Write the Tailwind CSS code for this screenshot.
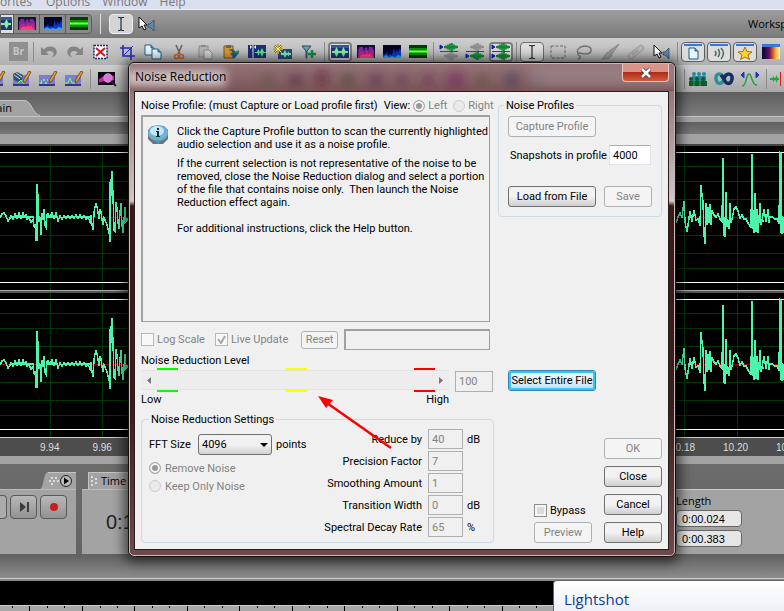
<!DOCTYPE html>
<html lang="en">
  <head>
    <meta charset="UTF-8" />
    <meta name="viewport" content="width=device-width, initial-scale=1.0" />
    <title>Noise Reduction</title>
    <script src="https://cdn.jsdelivr.net/npm/@tailwindcss/browser@4"></script>
  </head>
  <body class="relative h-screen overflow-hidden bg-[#636363] font-['Open_Sans','Noto_Sans',sans-serif] text-xs text-black">
    <!-- Icon Sprite -->
    <svg class="absolute size-0">
      <symbol id="i-wave" viewBox="0 0 20 16">
        <rect x="1" y="1" width="18" height="13" fill="#1e3670" /><path d="M1 1h18v3H1z" fill="#33569c" />
        <path d="M2 7h16v2H2zM4 8l2.500-5L9 8l-2.500 5zM11 8l2.500-5L16 8l-2.500 5z" fill="#7ff0a8" />
      </symbol>
      <symbol id="i-pink" viewBox="0 0 20 16">
        <rect x="1" y="1" width="18" height="13" fill="#1c0e33" />
        <path d="M2 14V6l2-3h3l1 4 1-3 2-1 1 4 1-4h3l2 3v8z" fill="#7a2a9a" /><path d="M2 14l1-4 2-3 2 1 2 3 1-4h2l1 3 2-3 2 2 1 5z" fill="#c8208a" /><path d="M3 14l2-3 9-1 4 4z" fill="#ff4078" />
      </symbol>
      <symbol id="i-blue" viewBox="0 0 20 16">
        <rect x="1" y="1" width="18" height="13" fill="#02042a" />
        <path d="M1 12l1-3 1 2 2-3 1 3 2-1 2 1 2-7 1 6 2-5 1 4 2-5 1 3v6H1z" fill="#0c36d8" /><path d="M1 13l3-2 3 2 3-1 3 1 3-2 3 1v2H1z" fill="#27a8f5" />
      </symbol>
      <symbol id="i-green" viewBox="0 0 20 16">
        <rect x="1" y="1" width="18" height="13" fill="#063a06" /><rect x="1" y="4" width="18" height="7" fill="#108c10" /><rect x="1" y="6" width="18" height="3" fill="#30d818" /><rect x="1" y="7" width="18" height="1" fill="#a0ff5a" />
      </symbol>
      <symbol id="i-ibeam" viewBox="0 0 20 16"><path d="M7 1.500h2l1 1 1-1h2M10 2v12M7 14.500h2l1-1 1 1h2" fill="none" stroke="#222c38" stroke-width="1.200" /></symbol>
      <symbol id="i-cursor" viewBox="0 0 20 16">
        <path d="M2 1v11l3-2 2 4 2-1-2-4h3z" fill="#fff" stroke="#111" /><path d="M11 8h2l4-4v11l-4-4h-2z" fill="#5d8ab0" stroke="#29455e" stroke-width=".7" />
      </symbol>
      <symbol id="i-undo" viewBox="0 0 20 16"><path d="M2 3v8h8L7.500 8.500c2-2 6-2 7 1 .5 2-1 3-2 4 4-1 6-4 5-7C16 2 9 1 5 5.500z" fill="#858585" /></symbol>
      <symbol id="i-delete" viewBox="0 0 20 16">
        <rect x="3" y="1.500" width="13" height="13" fill="#fff" stroke="#1c2c60" stroke-width="1.500" stroke-dasharray="2 1" /><path d="M5 4l9 8M14 4l-9 8" stroke="#d01820" stroke-width="2" />
      </symbol>
      <symbol id="i-crop" viewBox="0 0 20 16"><path d="M6 1v11h12M3 4h11v12" fill="none" stroke="#2a2ab8" stroke-width="1.600" /><path d="M6 12L16 2" stroke="#2a2ab8" /></symbol>
      <symbol id="i-copy" viewBox="0 0 20 16">
        <path d="M2 1h6l3 3v7H2z" fill="#e9f5fc" stroke="#27628a" /><path d="M9 5h6l3 3v7H9z" fill="#e9f5fc" stroke="#27628a" /><path d="M8 1v3h3M15 5v3h3" fill="#5fa6cf" stroke="#27628a" />
      </symbol>
      <symbol id="i-cut" viewBox="0 0 20 16">
        <path d="M7 1l4 9M13 1L9 10" stroke="#6d6258" stroke-width="1.500" /><circle cx="7.500" cy="12.500" r="2" fill="none" stroke="#c86428" stroke-width="1.600" /><circle cx="12.500" cy="12.500" r="2" fill="none" stroke="#c86428" stroke-width="1.600" />
      </symbol>
      <symbol id="i-paste" viewBox="0 0 20 16">
        <path d="M4 2h9v11H4z" fill="#b4b4b4" stroke="#8c8c8c" /><path d="M6 1h5v2H6z" fill="#888" /><path d="M9 6h5l3 3v6H9z" fill="#d2d2d2" stroke="#8c8c8c" />
      </symbol>
      <symbol id="i-pastenew" viewBox="0 0 20 16">
        <path d="M3 2h9v12H3z" fill="#d89a3c" stroke="#8a5412" /><path d="M5 1h5v3H5z" fill="#666" /><path d="M7 6c4-2 7 0 8 3h3l-5 6-4-6h3c-1-2-3-3-5-3z" fill="#1d5c8c" /><path d="M14 8l4-2v4z" fill="#2c8a3c" />
      </symbol>
      <symbol id="i-markwave" viewBox="0 0 20 16">
        <rect x="1" y="1" width="18" height="13" fill="#1d2f78" /><path d="M6 1v14" stroke="#dfe6ff" /><path d="M3 1l2 2-2 2zM9 1L7 3l2 2z" fill="#fff" /><path d="M8 8h11v1H8zM10 8l1.500-3L13 8l-1.500 4zM13 8l2-4 2 4-2 5z" fill="#5fe08a" />
      </symbol>
      <symbol id="i-starwave" viewBox="0 0 20 16">
        <rect x="5" y="5" width="14" height="10" fill="#2a4a80" /><path d="M8 9h10v2H8zM10 10l2-4 2 4-2 4zM14 10l1.500-2.500L17 10l-1.500 2.500z" fill="#7ff0a8" /><path d="M5 0v10M0 5h10M1.500 1.500l7 7M8.500 1.500l-7 7" stroke="#6a6420" stroke-width="2" /><path d="M5 0v10M0 5h10M1.500 1.500l7 7M8.500 1.500l-7 7" stroke="#fff27a" />
      </symbol>
      <symbol id="i-funnel" viewBox="0 0 20 16"><path d="M3 2h9L8 7v7H7V7z" fill="#6aa0b8" stroke="#1c4a60" /><path d="M13 6v8M9 10h8" stroke="#0c8c44" stroke-width="2.500" /></symbol>
      <symbol id="i-trk" viewBox="0 0 20 8"><path d="M1 2l3 2-3 2z" fill="#1018c0" stroke="#1018c0" /><path d="M5 4h14M7 2.500v3M9 1.500v5M11 .5v7M13 0v8M15 1.500v5M17 2.500v3" stroke="#0f8a32" stroke-width="1.800" /></symbol>
      <symbol id="i-trkoff" viewBox="0 0 20 8"><path d="M5 4h14M7 2.500v3M9 1.500v5M11 .5v7M13 0v8M15 1.500v5M17 2.500v3" stroke="#8f8f8f" stroke-width="1.800" /></symbol>
      <symbol id="i-marquee" viewBox="0 0 20 16"><rect x="3" y="2" width="14" height="12" fill="none" stroke="#6a6a6a" stroke-dasharray="3 1.500" /></symbol>
      <symbol id="i-lasso" viewBox="0 0 20 16"><path d="M5 10c-4-3 0-8 7-8 7 1 7 8-1 8-3 0-5-1-6-1-3 1 0 3 1 3s0 3-2 3" fill="none" stroke="#777" stroke-width="1.500" /></symbol>
      <symbol id="i-brush" viewBox="0 0 20 16"><path d="M19 0L9 7l3 3zM8 8l4 3c-2 4-6 4-10 4 3-2 3-6 6-7z" fill="#9c9c9c" stroke="#6f6f6f" stroke-width=".6" /></symbol>
      <symbol id="i-bandage" viewBox="0 0 20 16"><path d="M5 12L15 4" stroke="#8f8f8f" stroke-width="6" stroke-linecap="round" /><path d="M5 12L15 4" stroke="#b8b8b8" stroke-width="4.500" stroke-linecap="round" /><path d="M7 10L13 6" stroke="#909090" stroke-width="3" stroke-dasharray="1 1.500" /></symbol>
      <symbol id="i-page" viewBox="0 0 20 16"><path d="M1 0h18v2H1z" fill="#3a78d8" /><path d="M6 4h6l3 3v8H6z" fill="#e6f4fc" stroke="#1d5880" /><path d="M12 4v3h3" fill="#73b4dc" stroke="#1d5880" /></symbol>
      <symbol id="i-sound" viewBox="0 0 20 16"><path d="M1 0h18v2H1z" fill="#3a78d8" /><path d="M6 7q2 2 0 5M9 5q3 4 0 8M12 4q5 5 0 11" fill="none" stroke="#4c6a60" stroke-width="1.500" /></symbol>
      <symbol id="i-star" viewBox="0 0 20 16"><path d="M1 0h18v2H1z" fill="#3a78d8" /><path d="M10 3l2 4.500 5 .5-4 3 1.500 4.500-4.500-2.500-4.500 2.500L7 11 3 8l5-.5z" fill="#ffd235" stroke="#a8700c" /></symbol>
      <linearGradient id="heat"><stop offset=".1" stop-color="#150a3c" /><stop offset=".4" stop-color="#641060" /><stop offset=".6" stop-color="#d05a20" /><stop offset=".8" stop-color="#ffc050" /><stop offset="1" stop-color="#fff0c0" /></linearGradient>
      <symbol id="i-heat" viewBox="0 0 20 16"><path d="M1 0h18v3H1z" fill="#3a78d8" /><path d="M1 3h18v12H1z" fill="url(#heat)" /></symbol>
      <symbol id="i-pencil" viewBox="0 0 20 16">
        <path d="M1 4h16v11H1z" fill="#7c7cd4" /><path d="M1 13h16v2H1z" fill="#34348c" /><path d="M11 12l1-4 5-8 2 1-5 9z" fill="#e0a040" stroke="#6a3c10" stroke-width=".8" />
      </symbol>
      <symbol id="i-zoom" viewBox="0 0 20 16"><rect x="1" y="1" width="17" height="13" fill="#0c0210" /><path d="M2 8l5-3 5 2 5-3v5l-6 3-4-2-5 2z" fill="#d818b8" /><circle cx="11" cy="7" r="4" fill="#e070e0" stroke="#b89ac8" stroke-width="1.500" /><path d="M14 10l5 5" stroke="#222" stroke-width="2" /></symbol>
      <symbol id="i-people" viewBox="0 0 20 16">
        <g fill="#2a8a9c"><circle cx="6" cy="3" r="2" /><circle cx="11" cy="3" r="2" /><circle cx="16" cy="3" r="2" /><path d="M4 5h14v5H4z" /></g>
        <g fill="#0d5a24"><circle cx="3" cy="8" r="2" /><circle cx="9" cy="8" r="2" /><circle cx="15" cy="8" r="2" /><path d="M1 10h18v5H1z" /></g><path d="M6 10v5M12 10v5" stroke="#2fae4c" />
      </symbol>
      <symbol id="i-loop" viewBox="0 0 20 16"><path d="M10 8C8 1 1 2 2 8s6 6 8 0" fill="none" stroke="#2a90a0" stroke-width="3.500" /><path d="M10 8c2-7 9-6 8 0s-6 6-8 0L7 4" fill="none" stroke="#152f60" stroke-width="3.500" /></symbol>
      <symbol id="i-curve" viewBox="0 0 20 16"><path d="M2 15c5 0 4-12 7-12s3 12 8 11" fill="none" stroke="#22a03c" stroke-width="1.500" /><path d="M1 4l3-3v6zM19 4l-3-3v6z" fill="#1838c0" stroke="#1838c0" /></symbol>
      <symbol id="grip" viewBox="0 0 11 8"><path d="M3 1h2M7 1h2M1 4h2M5 4h2M9 4h2M3 7h2" stroke="#ddd" stroke-width="2" /></symbol>
      <symbol id="grip-tall" viewBox="0 0 7 11"><path d="M0 1h2M4 3h2M0 5h2M4 7h2M0 9h2" stroke="#ddd" stroke-width="2" /></symbol>
    </svg>

    <div class="flex min-h-full flex-col">
      <!-- Menu Bar -->
      <nav class="flex h-[9px] items-end gap-3 overflow-hidden bg-[#dbe0f0] leading-[14px] text-[#777]">
        <a href="#" class="flex w-[34px] shrink-0 justify-end pr-0.5">Favorites</a>
        <a href="#">Options</a>
        <a href="#">Window</a>
        <a href="#">Help</a>
      </nav>

      <!-- View Toolbar -->
      <div class="flex h-[29px] items-center border-t border-[#eee] bg-linear-to-b from-[#9e9e9e] to-[#797979]">
        <div class="flex h-5 items-center rounded-r border border-[#5c5c5c] bg-[#8a8a8a]">
          <div class="flex h-full w-3 items-center justify-end overflow-hidden bg-[#ddd]"><svg class="h-4 w-5 shrink-0"><use href="#i-wave" /></svg></div>
          <div class="flex h-full w-[26px] items-center justify-center border-l border-[#5c5c5c]"><svg class="h-4 w-5"><use href="#i-pink" /></svg></div>
          <div class="flex h-full w-[26px] items-center justify-center border-l border-[#5c5c5c]"><svg class="h-4 w-5"><use href="#i-blue" /></svg></div>
          <div class="flex h-full w-[26px] items-center justify-center border-l border-[#5c5c5c]"><svg class="h-4 w-5"><use href="#i-green" /></svg></div>
        </div>
        <div class="mx-2 h-5 w-px bg-[#ddd]"></div>
        <button class="flex h-5 w-6 items-center justify-center rounded border border-[#eee] bg-[#d4d4d4]"><svg class="h-4 w-5"><use href="#i-ibeam" /></svg></button>
        <button class="ml-1"><svg class="h-4 w-5"><use href="#i-cursor" /></svg></button>
        <div class="ml-auto w-9 overflow-hidden whitespace-nowrap text-[11px]">Workspace:</div>
      </div>

      <!-- Edit Toolbar -->
      <div class="flex h-[27px] items-center overflow-hidden bg-linear-to-b from-[#cecece] to-[#b0b0b0] *:shrink-0">
        <div class="flex w-[31px] justify-end pr-[3px]"><span class="flex size-[19px] items-center justify-center bg-[#8f8f8f] text-[10px] font-bold text-[#c8c8c8]">Br</span></div>
        <div class="mx-0.5 h-5 w-px bg-[#8c8c8c]"></div>
        <svg class="mx-[3px] h-4 w-5"><use href="#i-undo" /></svg>
        <svg class="mx-[3px] h-4 w-5 -scale-x-100"><use href="#i-undo" /></svg>
        <svg class="mx-[3px] h-4 w-5"><use href="#i-delete" /></svg>
        <svg class="mx-[3px] h-4 w-5"><use href="#i-crop" /></svg>
        <svg class="mx-[3px] h-4 w-5"><use href="#i-copy" /></svg>
        <svg class="mx-[3px] h-4 w-5"><use href="#i-cut" /></svg>
        <svg class="mx-[3px] h-4 w-5"><use href="#i-paste" /></svg>
        <svg class="mx-[3px] h-4 w-5"><use href="#i-pastenew" /></svg>
        <svg class="mx-[3px] h-4 w-5"><use href="#i-markwave" /></svg>
        <svg class="mx-[3px] h-4 w-5"><use href="#i-starwave" /></svg>
        <svg class="mx-[3px] h-4 w-5"><use href="#i-funnel" /></svg>
        <div class="mx-0.5 h-5 w-px bg-[#8c8c8c]"></div>
        <div class="mx-px flex h-5 w-6 items-center justify-center rounded border-2 border-[#7e7e7e] bg-[#ddd]"><svg class="h-4 w-5 shrink-0"><use href="#i-wave" /></svg></div>
        <svg class="mx-[3px] h-4 w-5"><use href="#i-pink" /></svg>
        <svg class="mx-[3px] h-4 w-5"><use href="#i-blue" /></svg>
        <svg class="mx-[3px] h-4 w-5"><use href="#i-green" /></svg>
        <div class="mx-0.5 h-5 w-px bg-[#8c8c8c]"></div>
        <div class="flex w-[26px] flex-col items-center"><svg class="h-2 w-5"><use href="#i-trk" /></svg><div class="h-px w-[18px] bg-red-600"></div><svg class="h-2 w-5"><use href="#i-trkoff" /></svg></div>
        <div class="flex w-[26px] flex-col items-center"><svg class="h-2 w-5"><use href="#i-trkoff" /></svg><div class="h-px w-[18px] bg-red-600"></div><svg class="h-2 w-5"><use href="#i-trk" /></svg></div>
        <div class="mx-px flex h-5 w-6 flex-col items-center justify-center rounded border-2 border-[#7e7e7e] bg-[#ddd]"><svg class="h-2 w-5 shrink-0"><use href="#i-trk" /></svg><div class="h-px w-[18px] shrink-0 bg-red-600"></div><svg class="h-2 w-5 shrink-0"><use href="#i-trk" /></svg></div>
        <div class="mx-0.5 h-5 w-px bg-[#8c8c8c]"></div>
        <div class="mx-px flex h-5 w-6 items-center justify-center rounded border border-[#6e6e6e] bg-[#ddd]"><svg class="h-4 w-5"><use href="#i-ibeam" /></svg></div>
        <svg class="mx-[3px] h-4 w-5"><use href="#i-marquee" /></svg>
        <svg class="mx-[3px] h-4 w-5"><use href="#i-lasso" /></svg>
        <svg class="mx-[3px] h-4 w-5"><use href="#i-brush" /></svg>
        <svg class="mx-[3px] h-4 w-5"><use href="#i-bandage" /></svg>
        <svg class="mx-[3px] h-4 w-5"><use href="#i-cursor" /></svg>
        <div class="mx-0.5 h-5 w-px bg-[#8c8c8c]"></div>
        <div class="mx-px flex h-5 w-6 items-center justify-center rounded border border-[#5e5e5e] bg-[#ddd]"><svg class="h-4 w-5 shrink-0"><use href="#i-page" /></svg></div>
        <div class="mx-px flex h-5 w-6 items-center justify-center rounded border border-[#5e5e5e] bg-[#ddd]"><svg class="h-4 w-5 shrink-0"><use href="#i-sound" /></svg></div>
        <div class="mx-px flex h-5 w-6 items-center justify-center rounded border border-[#5e5e5e] bg-[#ddd]"><svg class="h-4 w-5 shrink-0"><use href="#i-star" /></svg></div>
        <svg class="mx-[3px] h-4 w-5"><use href="#i-heat" /></svg>
      </div>

      <!-- Effects Toolbar -->
      <div class="flex h-[27px] items-center overflow-hidden bg-linear-to-b from-[#cecece] to-[#a8a8a8] *:shrink-0">
        <div class="flex w-[9px] justify-end pr-[3px]"><svg class="h-4 w-5 shrink-0"><use href="#i-pencil" /></svg></div>
        <svg class="mx-[3px] h-4 w-5" viewBox="0 0 20 16"><use href="#i-pencil" width="20" height="16" /><path d="M1 3l4-2 6 3-1 5-4 2-4-2z" fill="#34506c" /><path d="M2 4l6 4M4 2l6 4" stroke="#cde" /><path d="M6 12l3-3 3 4" stroke="#6f6" fill="none" /></svg>
        <svg class="mx-[3px] h-4 w-5" viewBox="0 0 20 16"><use href="#i-pencil" width="20" height="16" /><path d="M2 12h2M5 9h2M7 12h2M3 10h1M9 9h1" stroke="#7f7" stroke-width="1.500" /></svg>
        <svg class="mx-[3px] h-4 w-5" viewBox="0 0 20 16"><use href="#i-pencil" width="20" height="16" /><path d="M1 12h3l2-5 2 5h3" stroke="#7f7" fill="none" /></svg>
        <div class="mx-[3px] h-5 w-px bg-[#8c8c8c]"></div>
        <svg class="mx-[3px] h-4 w-5"><use href="#i-zoom" /></svg>
        <div class="ml-auto h-5 w-px bg-[#8c8c8c]"></div>
        <svg class="mx-[3px] h-4 w-5"><use href="#i-people" /></svg>
        <svg class="mx-[3px] h-4 w-5"><use href="#i-loop" /></svg>
        <svg class="mx-[3px] h-4 w-5"><use href="#i-curve" /></svg>
        <div class="mx-[3px] h-5 w-px bg-[#8c8c8c]"></div>
        <svg class="h-4 w-3.5" viewBox="0 0 14 16"><path d="M0 7h9v2H0zM2 8l1.500-3L5 8l-1.500 3zM5 8l1.500-4L8 8l-1.500 4z" fill="#20a83c" /><path d="M10.500 1v14" stroke="#e01818" /></svg>
      </div>

      <!-- Document Tabs -->
      <div class="flex h-[25px] items-end border-b border-[#c4c4c4] bg-linear-to-b from-[#5e5e5e] to-[#7c7c7c]">
        <div class="flex h-4 w-6 items-center justify-end overflow-hidden border-t border-[#c4c4c4] bg-[#a3a3a3] pr-3 text-[11px] whitespace-nowrap">Main</div>
        <svg class="h-4 w-4" viewBox="0 0 16 16"><path d="M0 0C8 0 8 14 16 16H0z" fill="#a3a3a3" /><path d="M0 .5C8 .5 8 14 16 15.500" fill="none" stroke="#c4c4c4" /></svg>
      </div>
      <div class="h-[5px] bg-[#a3a3a3]"></div>
      <div class="h-3 bg-linear-to-b from-[#606060] to-[#787878]"></div>
      <div class="h-3 border-b-2 border-[#444] bg-[#a3a3a3]"></div>

      <!-- Waveform Display -->
      <svg class="h-[291px] w-full bg-black" viewBox="0 0 784 291" preserveAspectRatio="none" shape-rendering="crispEdges">
        <defs>
          <g id="channel">
            <path d="M0 20.500h784M0 35.500h784M0 53.500h784M0 89.500h784M0 107.500h784M0 122.500h784" stroke="#003800" />
            <path d="M0 6.500h784M0 136.500h784" stroke="#fff" />
            <path d="M0 71.500h784" stroke="#a00000" />
            <g fill="none" stroke="#4df5ab" stroke-width="1.500" transform="translate(0 71)">
              <path d="M0 1L2-3 4-4 6-1 8 4 10 1 11-1 13 2 15-3 17 1 19-4 21 1 23-4 24 0 26-2 27 2 29 1 31 5 33 3 34 10 35 7 36 24 37-33 38-20 39 5 40 0 41 18 42-4 43 3 44-8 45 8 46 10 47-2 48-3 50 0 52-4 54 1 56-4 58 4 60-1 62 2 64-1 66 1 68-1 70 1 72-1 74 1 76-2 78 1 80-2 82 1 84-1 86 2 88 0 90 5 91-2 92 8 93 13 94-4 95-10 96-14 97-10 98-5 99 2 100-8 101-5 102 3 103 8 104 1 105 3 107 8 108 12 109 14 110 25 111-35 112-46 113-22 114 13 115 14 116-15 117-8 118 5 119 12 120-5 121-14 122 8 123 16 124 4 125-10 126 4 130 0" />
              <path d="M676 6L678 0 680-4 682 1 684-16 685 5 687 15 688 8 690-6 692 5 694-7 696 3 698 2 699 5 700 9 701-32 702-22 703-16 704 18 705 27 706-14 707 8 708-10 709 6 710-13 711 8 712-7 714-2 716 0 718-3 720 2 722 4 723-59 724 18 725 20 726-25 727 10 728 3 729 12 730-14 731 6 732 2 734-8 736-10 738-6 740 1 742-2 744 2 746 2 748 6 750 9 751 11 752-63 753 10 754 16 755-24 756 15 757-8 758 16 759 3 760-14 761 8 762 4 764-8 766 5 768-8 769 6 770 0 772 0 775 2 777 2 779 7 780-64 781-63 782 17 783 0 784 16" />
              <path d="M11 0H34M47 0H58M76 0H92M110-35V25M37-33V24M752-60V10M755 4H764M780.500-64V16" stroke-width="2" />
            </g>
          </g>
        </defs>
        <path d="M50.500 0v291M102.500 0v291M684.500 0v291M737.500 0v291" stroke="#003800" />
        <use href="#channel" />
        <use href="#channel" y="147" />
        <path d="M0 144.500h784" stroke="#aaa" /><path d="M0 146h784" stroke="#555" stroke-width="2" />
      </svg>

      <!-- Time Ruler -->
      <div class="flex h-[19px] items-center justify-between border-t border-[#ccc] bg-[#4d4d4d] pt-0.5 font-['Liberation_Sans',sans-serif] text-[10px] leading-[14px] text-[#ddd]">
        <div class="flex gap-[33px] pl-10"><span>9.94</span><span>9.96</span></div>
        <div class="flex w-[114px] gap-7 overflow-hidden"><span>10.18</span><span>10.20</span><span>10.22</span></div>
      </div>
      <div class="h-2 bg-[#a3a3a3]"></div>

      <!-- Bottom Panels -->
      <div class="flex h-[90px] gap-1.5 bg-linear-to-b from-[#6c6c6c] to-[#646464] pt-2">
        <div class="flex w-[76px] flex-col">
          <div class="flex h-[17px] justify-end">
            <svg class="h-[17px] w-2" viewBox="0 0 8 17"><path d="M0 17C4 16 3 1 8 0V17z" fill="#a3a3a3" /></svg>
            <div class="flex w-7 items-center gap-px border-t border-[#c4c4c4] bg-[#a3a3a3]">
              <svg class="h-2 w-[11px]"><use href="#grip" /></svg>
              <svg class="size-3" viewBox="0 0 12 12"><circle cx="6" cy="6" r="5.500" fill="#bbb" stroke="#222" /><path d="M4 2.500L9 6 4 9.500z" /></svg>
            </div>
          </div>
          <div class="flex h-[65px] gap-[3px] border-t border-[#bbb] bg-[#a3a3a3] pt-[5px]">
            <button class="h-6 w-[7px] rounded-r border border-l-0 border-[#5a5a5a] bg-[#ababab]"></button>
            <button class="flex h-6 w-[27px] items-center justify-center rounded border border-[#5a5a5a] bg-linear-to-b from-[#b8b8b8] to-[#929292]"><svg class="h-3 w-3" viewBox="0 0 12 12"><path d="M2 1l6 5-6 5zM9 1h2v10H9z" fill="#3c3c3c" /></svg></button>
            <button class="flex h-6 w-[27px] items-center justify-center rounded border border-[#5a5a5a] bg-linear-to-b from-[#b8b8b8] to-[#929292]"><span class="size-2 rounded-full bg-[#c42020]"></span></button>
          </div>
        </div>
        <div class="flex w-[130px] flex-col">
          <div class="ml-1.5 flex h-[17px] items-center gap-[3px] border-t border-l border-[#c4c4c4] bg-[#a3a3a3] pl-0.5"><svg class="h-[11px] w-[7px]"><use href="#grip-tall" /></svg><span class="text-[11px]">Time</span></div>
          <div class="h-[65px] border-t border-[#bbb] bg-[#a3a3a3] pt-[18px] pl-6 font-['Liberation_Sans',sans-serif] text-xl text-[#222]">0:10.000</div>
        </div>
        <div class="mt-[17px] ml-auto flex w-[116px] flex-col border-t border-[#ccc] bg-[#a3a3a3] pt-[3px] pl-2">
          <span class="text-[11px] leading-4">Length</span>
          <div class="flex flex-col gap-[3px] pt-px">
            <input aria-label="Selection length" value="0:00.024" class="h-[17px] w-[66px] rounded border border-[#666] bg-[#e6e6e6] px-[5px] font-['Liberation_Sans',sans-serif] text-[11px]" />
            <input aria-label="View length" value="0:00.383" class="h-[17px] w-[66px] rounded border border-[#666] bg-[#e6e6e6] px-[5px] font-['Liberation_Sans',sans-serif] text-[11px]" />
          </div>
        </div>
      </div>
      <div class="h-6 bg-linear-to-b from-[#606060] to-[#8c8c8c]"></div>
      <div class="h-[3px] border-t border-[#ccc] bg-[#888]"></div>
      <div class="h-6 bg-black"></div>
      <svg class="h-[6px] w-full grow border-t border-[#ccc] bg-[#a8a8a8]"><path d="M12.500 0v2M47.500 0v2M64.500 0v2M100.500 0v2M117.500 0v2M152.500 0v2M169.500 0v2M204.500 0v2M222.500 0v2M257.500 0v2M274.500 0v2M309.500 0v2M327.500 0v2M362.500 0v2M379.500 0v2M414.500 0v2M432.500 0v2M467.500 0v2M484.500 0v2M519.500 0v2M536.500 0v2M29.500 0v5M82.500 0v5M134.500 0v5M187.500 0v5M239.500 0v5M292.500 0v5M344.500 0v5M397.500 0v5M449.500 0v5M502.500 0v5" stroke="#000" /></svg>
    </div>

    <!-- Noise Reduction Dialog -->
    <div role="dialog" aria-labelledby="dialog-title" class="absolute top-[62px] left-32 flex w-[548px] flex-col rounded-md border border-[#141010] bg-[linear-gradient(#7d6266,#cfc8c8_28%,#3a1818_29%,#3a1c1c_70%,#6e4a4c)] shadow-[0_1px_12px_4px_rgba(0,0,0,0.6)]">
      <div class="rounded-[5px] border border-[#c8b8ba] px-[5px] pb-[5px] pl-1">
        <div class="relative flex h-[27px] items-center justify-between">
          <!-- Glass title bar with the toolbar icons showing through -->
          <svg class="absolute inset-y-0 -left-1 h-full w-[544px] rounded-t" viewBox="0 0 544 27" preserveAspectRatio="none">
            <defs><filter id="soft"><feGaussianBlur stdDeviation="5" /></filter><linearGradient id="glass" x2="0" y2="1"><stop stop-color="#957478" /><stop offset="1" stop-color="#775456" /></linearGradient></defs>
            <rect width="544" height="27" fill="url(#glass)" />
            <g filter="url(#soft)">
              <rect x="-4" y="6" width="100" height="16" fill="#d0c2c5" />
              <g opacity=".55">
                <circle cx="138" cy="16" r="7" fill="#5c5840" /><circle cx="166" cy="16" r="7" fill="#4c2c40" /><circle cx="192" cy="14" r="7" fill="#5c1830" /><circle cx="218" cy="16" r="7" fill="#484838" />
                <circle cx="246" cy="16" r="7" fill="#582c58" /><circle cx="272" cy="16" r="6" fill="#583858" /><circle cx="298" cy="16" r="6" fill="#702c58" /><circle cx="326" cy="16" r="9" fill="#782060" /><circle cx="352" cy="16" r="6" fill="#585038" />
                <circle cx="382" cy="16" r="8" fill="#484060" /><circle cx="408" cy="16" r="7" fill="#484058" />
              </g>
              <rect x="400" y="2" width="150" height="20" fill="#a08c92" opacity=".6" />
            </g>
          </svg>
          <h1 id="dialog-title" class="relative pb-0.5 pl-px">Noise Reduction</h1>
          <button aria-label="Close" class="relative flex h-[18px] w-[47px] items-center justify-center self-start rounded-b border border-t-0 border-[#e8c8c0] bg-linear-to-b from-[#d89488] from-45% via-[#b02c14] via-50% to-[#d05c40]">
            <svg class="h-3 w-3" viewBox="0 0 12 12"><path d="M2 2l8 8M10 2l-8 8" stroke="#4a3038" stroke-width="4" /><path d="M2 2l8 8M10 2l-8 8" stroke="#fff" stroke-width="2.500" /></svg>
          </button>
        </div>

        <form class="flex border border-[#2a1c1c] bg-[#f0f0f0] pt-1.5 pr-1.5 pb-1.5 pl-1.5 font-[Roboto,sans-serif] text-[11px] leading-[13px] whitespace-nowrap">
          <!-- Left Column -->
          <div class="flex w-[353px] shrink-0 flex-col">
            <div class="flex h-[17px] items-start gap-1.5 pt-px">
              <span>Noise Profile: (must Capture or Load profile first)</span>
              <label class="flex items-center gap-[3px] text-[#838383]"><span class="text-black">View:</span><input type="radio" name="view" checked disabled class="size-3 appearance-none rounded-full border border-[#aaa] bg-[#f4f4f4] checked:bg-[#999] checked:inset-ring-2 checked:inset-ring-[#f4f4f4]" />Left</label>
              <label class="flex items-center gap-[3px] text-[#838383]"><input type="radio" name="view" disabled class="size-3 appearance-none rounded-full border border-[#ccc] bg-[#eaeaea]" />Right</label>
            </div>
            <div class="flex h-[207px] w-[349px] gap-2 border border-t-2 border-l-2 border-[#a0a0a0] pt-2 pl-1">
              <svg class="h-5 w-[22px] shrink-0" viewBox="0 0 22 20"><path d="M5 1h12l4 4v9l-5 5H6l-5-5V5z" fill="#6f7478" /><ellipse cx="11" cy="8" rx="10" ry="8" fill="#6fb2d6" /><ellipse cx="10" cy="6" rx="7" ry="5" fill="#c4e6f6" /><path d="M10 3h2v2h-2zM9 6h3v5h1v1H9v-1h1V7H9z" fill="#14303f" /><path d="M7 15l4 4 4-4z" fill="#4a9ac8" /></svg>
              <div>
                <p>Click the Capture Profile button to scan the currently highlighted<br />audio selection and use it as a noise profile.</p>
                <p class="mt-1.5">If the current selection is not representative of the noise to be<br />removed, close the Noise Reduction dialog and select a portion<br />of the file that contains noise only.&nbsp; Then launch the Noise<br />Reduction effect again.</p>
                <p class="mt-[13px]">For additional instructions, click the Help button.</p>
              </div>
            </div>
            <div class="mt-[7px] flex h-[21px] w-[349px] items-center text-[#838383]">
              <label class="flex items-center gap-[3px]"><input type="checkbox" disabled class="size-[13px] appearance-none border border-[#b8b8b8] bg-[#f8f8f8]" />Log Scale</label>
              <label class="relative ml-2.5 flex items-center gap-[3px]"><input type="checkbox" checked disabled class="size-[13px] appearance-none border border-[#b8b8b8] bg-[#f8f8f8]" /><svg class="absolute left-0.5 h-[9px] w-[9px]" viewBox="0 0 9 9"><path d="M1 4l3 4 4-7" fill="none" stroke="#a8a8a8" stroke-width="2" /></svg>Live Update</label>
              <button type="button" disabled class="ml-auto h-[18px] w-[37px] rounded-[3px] border border-[#adb2b5] bg-[#f4f4f4]">Reset</button>
              <input aria-label="Status" readonly class="ml-1.5 h-[21px] w-[146px] border border-t-2 border-l-2 border-[#a0a0a0]" />
            </div>
            <div class="mt-1 h-[14px]">Noise Reduction Level</div>
            <div class="flex h-6 items-end justify-between">
              <!-- Level slider with low, middle and high marks -->
              <div class="flex h-6 w-[308px] flex-col">
                <div class="flex h-0.5 justify-between px-4 pr-[14px]"><span class="w-[21px] bg-[#0f0]"></span><span class="w-[21px] bg-[#ff0]"></span><span class="w-[21px] bg-[#f00]"></span></div>
                <div class="flex h-5 items-center justify-between border-y border-[#e3e3e3] bg-[#ededed] px-1.5">
                  <svg class="h-[7px] w-1" viewBox="0 0 4 7"><path d="M4 0v7L0 3.500z" fill="#777" /></svg>
                  <svg class="h-[7px] w-1" viewBox="0 0 4 7"><path d="M0 0v7l4-3.500z" fill="#777" /></svg>
                </div>
                <div class="flex h-0.5 justify-between px-4 pr-[14px]"><span class="w-[21px] bg-[#0f0]"></span><span class="w-[21px] bg-[#ff0]"></span><span class="w-[21px] bg-[#f00]"></span></div>
              </div>
              <input aria-label="Noise reduction level" value="100" disabled class="mr-px h-[21px] w-[38px] border border-[#afafaf] bg-[#f0f0f0] px-[3px] text-[#838383]" />
            </div>
            <div class="flex h-[21px] w-[308px] justify-between pt-px"><span>Low</span><span>High</span></div>

            <fieldset class="flex h-[130px] justify-between rounded border border-[#d0dae2] pr-[11px] pl-[7px]">
              <legend class="px-0.5">Noise Reduction Settings</legend>
              <div class="flex flex-col pt-2">
                <div class="flex h-[21px] items-center gap-1">
                  <label for="fft" class="w-[45px]">FFT Size</label>
                  <span class="relative flex items-center">
                    <select id="fft" class="h-[21px] w-[74px] appearance-none rounded-[3px] border border-[#707070] bg-linear-to-b from-[#f2f2f2] from-50% to-[#d2d2d2] px-[3px] text-black"><option>4096</option></select>
                    <svg class="pointer-events-none absolute right-1 h-1 w-2" viewBox="0 0 8 4"><path d="M0 0h8L4 4z" /></svg>
                  </span>
                  <span>points</span>
                </div>
                <label class="mt-1 flex h-[18px] items-center gap-1 text-[#838383]"><input type="radio" name="mode" checked disabled class="size-3 appearance-none rounded-full border border-[#aaa] bg-[#f4f4f4] checked:bg-[#999] checked:inset-ring-2 checked:inset-ring-[#f4f4f4]" />Remove Noise</label>
                <label class="flex h-[18px] items-center gap-1 text-[#838383]"><input type="radio" name="mode" disabled class="size-3 appearance-none rounded-full border border-[#ccc] bg-[#eaeaea]" />Keep Only Noise</label>
              </div>
              <div class="grid auto-rows-[20px] grid-cols-[auto_35px_15px] items-center gap-x-1 gap-y-[2px] pt-[3px] text-right">
                <label for="reduce" class="pr-0.5">Reduce by</label><input id="reduce" value="40" disabled class="h-5 border border-[#afafaf] px-[3px] text-[#838383]" /><span class="text-left">dB</span>
                <label for="precision" class="pr-0.5">Precision Factor</label><input id="precision" value="7" disabled class="h-5 border border-[#afafaf] px-[3px] text-[#838383]" /><span></span>
                <label for="smoothing" class="pr-0.5">Smoothing Amount</label><input id="smoothing" value="1" disabled class="h-5 border border-[#afafaf] px-[3px] text-[#838383]" /><span></span>
                <label for="transition" class="pr-0.5">Transition Width</label><input id="transition" value="0" disabled class="h-5 border border-[#afafaf] px-[3px] text-[#838383]" /><span class="text-left">dB</span>
                <label for="decay" class="pr-0.5">Spectral Decay Rate</label><input id="decay" value="65" disabled class="h-5 border border-[#afafaf] px-[3px] text-[#838383]" /><span class="text-left">%</span>
              </div>
            </fieldset>
          </div>

          <!-- Right Column -->
          <div class="ml-1 flex flex-1 flex-col">
            <fieldset class="mt-px flex h-[118px] flex-col rounded border border-[#d0dae2] pl-[9px]">
              <legend class="-ml-1 px-0.5">Noise Profiles</legend>
              <button type="button" disabled class="mt-1 h-[21px] w-[88px] shrink-0 rounded-[3px] border border-[#adb2b5] bg-[#f4f4f4] text-[#838383]">Capture Profile</button>
              <div class="mt-2 flex items-center justify-between pr-2.5 pl-0.5"><label for="snapshots">Snapshots in profile</label><input id="snapshots" value="4000" class="h-5 w-[42px] border border-[#dde3ea] border-t-[#abadb3] bg-white px-[3px]" /></div>
              <div class="mt-[21px] flex gap-2">
                <button type="button" class="h-[21px] w-[88px] rounded-[3px] border border-[#707070] bg-linear-to-b from-[#f2f2f2] from-50% to-[#cfcfcf]">Load from File</button>
                <button type="button" disabled class="h-[21px] w-12 rounded-[3px] border border-[#adb2b5] bg-[#f4f4f4] text-[#838383]">Save</button>
              </div>
            </fieldset>
            <button type="button" class="mt-[153px] ml-[10px] h-[21px] w-[88px] shrink-0 rounded-[3px] border border-[#3c7fb1] bg-linear-to-b from-[#e8f4fb] from-50% to-[#b5dcf2] inset-ring-2 inset-ring-[#30c8f8]">Select Entire File</button>
            <div class="mt-auto flex items-end justify-end gap-3">
              <div class="flex flex-col gap-[5px]">
                <label class="flex items-center gap-[3px]"><input type="checkbox" class="size-[13px] appearance-none border border-[#8e8f8f] bg-[#d8dbe0] inset-ring-2 inset-ring-[#f6f6f6]" />Bypass</label>
                <button type="button" disabled class="h-[21px] w-[58px] rounded-[3px] border border-[#adb2b5] bg-[#f4f4f4] text-[#838383]">Preview</button>
              </div>
              <div class="flex w-[58px] flex-col gap-[7px]">
                <button type="button" disabled class="h-[21px] rounded-[3px] border border-[#adb2b5] bg-[#f4f4f4] text-[#838383]">OK</button>
                <button type="button" class="h-[21px] rounded-[3px] border border-[#707070] bg-linear-to-b from-[#f2f2f2] from-50% to-[#cfcfcf]">Close</button>
                <button type="button" class="h-[21px] rounded-[3px] border border-[#707070] bg-linear-to-b from-[#f2f2f2] from-50% to-[#cfcfcf]">Cancel</button>
                <button type="button" class="h-[21px] rounded-[3px] border border-[#707070] bg-linear-to-b from-[#f2f2f2] from-50% to-[#cfcfcf]">Help</button>
              </div>
            </div>
          </div>
        </form>
      </div>

      <!-- Arrow annotation pointing at the slider -->
      <svg class="pointer-events-none absolute top-[332px] left-[188px] h-[56px] w-[78px]" viewBox="0 0 78 56"><path d="M10 8L74 53" stroke="#f00" stroke-width="2.500" /><path d="M1 1l15 4-7 8z" fill="#f00" /></svg>
    </div>

    <!-- Lightshot Notification -->
    <div class="absolute right-0 bottom-0 left-[553px] h-[31px] rounded-tl border-t border-l border-[#666] bg-linear-to-b from-white to-[#eef0f6] pt-2 pl-2.5 text-[15px] leading-5 text-[#0a3a9a]">Lightshot</div>
  </body>
</html>
